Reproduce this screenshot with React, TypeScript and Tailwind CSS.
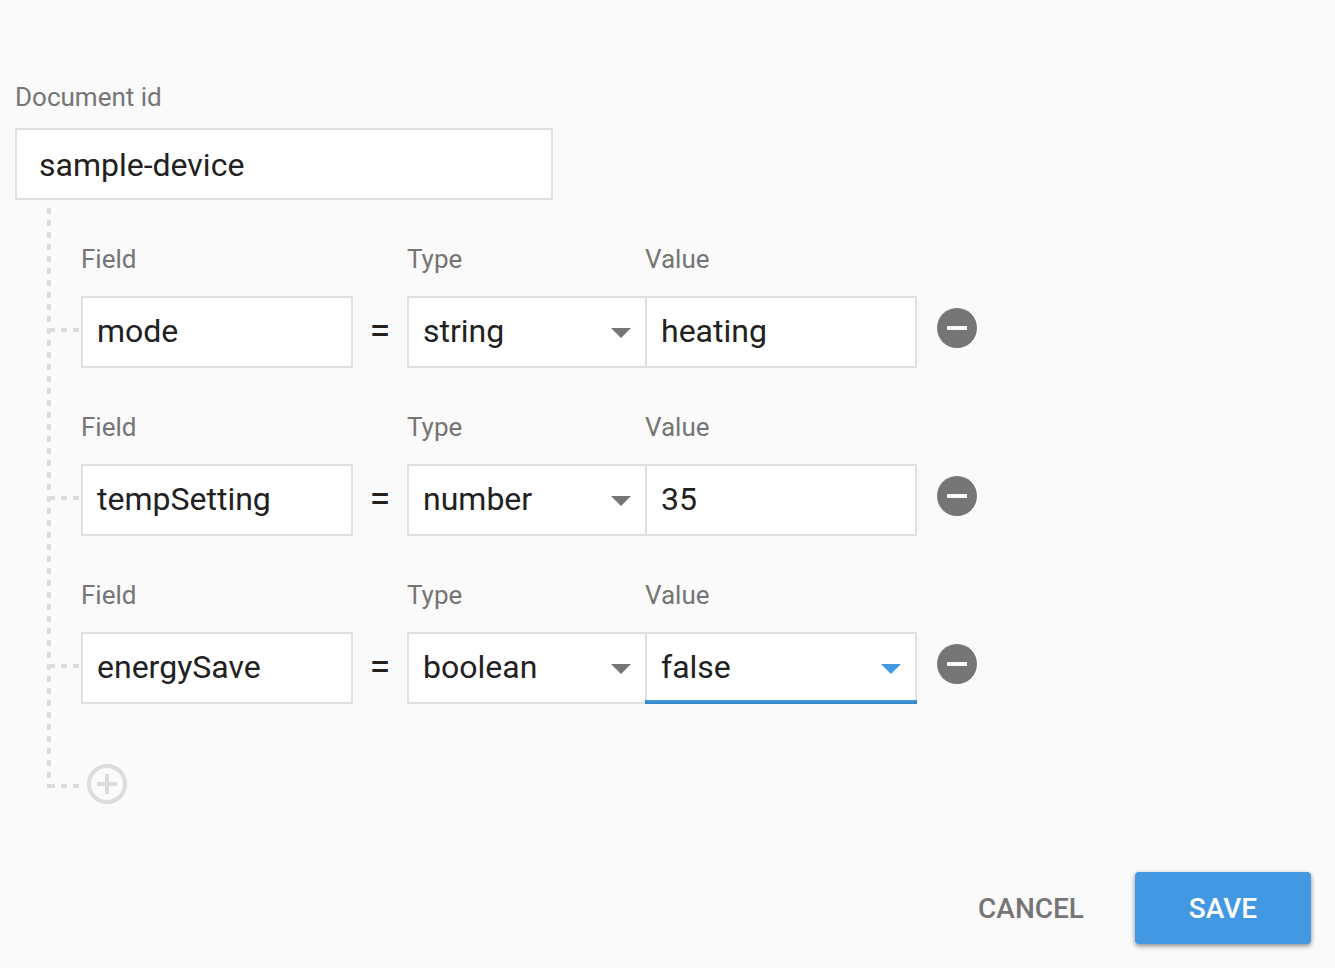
import type { ReactNode } from "react";

type Row = { field: string; type: string; value: string; active?: boolean };

const rows: Row[] = [
  { field: "mode", type: "string", value: "heating" },
  { field: "tempSetting", type: "number", value: "35" },
  { field: "energySave", type: "boolean", value: "false", active: true },
];

function Label({ children }: { children: ReactNode }) {
  return (
    <div className="h-8 whitespace-nowrap text-[26px] leading-8 text-[#757575]">
      {children}
    </div>
  );
}

function Caret({ className }: { className: string }) {
  return (
    <svg viewBox="0 0 20 10" className={`h-[10px] w-5 ${className}`}>
      <path d="M0 0h20L10 10z" fill="currentColor" />
    </svg>
  );
}

function Branch() {
  return (
    <div className="h-1 w-7 shrink-0 bg-[repeating-linear-gradient(90deg,#dcdcdc_0_4px,transparent_4px_10px,#dcdcdc_10px_12px)]" />
  );
}

const box =
  "mt-[21px] flex h-[72px] items-center justify-between border-2 border-[#e0e0e0] bg-white pl-[14px] pr-[14px] pb-[2px] text-[32px] leading-10 text-[#212121]";

function FieldRow({ row }: { row: Row }) {
  return (
    <div className="flex h-[168px]">
      <div className="pt-[120px]">
        <Branch />
      </div>
      <div className="ml-[2px] w-[272px] pt-[35px]">
        <Label>Field</Label>
        <div className={box}>{row.field}</div>
      </div>
      <div className="w-[54px] pt-[103px] text-center text-[38px] leading-10 text-[#212121]">=</div>
      <div className="w-[240px] pt-[35px]">
        <Label>Type</Label>
        <div className={box}>
          <span>{row.type}</span>
          <Caret className="mt-[4px] text-[#757575]" />
        </div>
      </div>
      <div className="-ml-[2px] w-[272px] pt-[35px]">
        <Label>Value</Label>
        {row.active ? (
          <div className="mt-[21px]">
            <div className="flex h-[68px] items-center justify-between border-2 border-b-0 border-[#e0e0e0] bg-white px-[14px] text-[32px] leading-10 text-[#212121]">
              <span>{row.value}</span>
              <Caret className="mt-[4px] text-[#4299e1]" />
            </div>
            <div className="h-1 border-x-2 border-b-2 border-[#3a87c8] bg-[#4299e1]" />
          </div>
        ) : (
          <div className={box}>{row.value}</div>
        )}
      </div>
      <button className="ml-5 mt-[100px] h-10 w-10">
        <svg viewBox="0 0 40 40" className="block h-10 w-10">
          <circle cx="20" cy="20" r="20" fill="#757575" />
          <path d="M10 18h20v4H10z" fill="#fafafa" />
        </svg>
      </button>
    </div>
  );
}

export default function App() {
  return (
    <div className="flex h-[968px] w-[1335px] flex-col overflow-hidden bg-[#fafafa] pt-[81px] font-['Roboto',sans-serif]">
      <div className="pl-[15px]">
        <Label>Document id</Label>
        <div className="mt-[15px] flex h-[72px] w-[538px] items-center border-2 border-[#e0e0e0] bg-white pl-[22px] pt-[2px] text-[32px] leading-10 text-[#212121]">
          sample-device
        </div>
      </div>
      <div className="ml-[47px] mt-2 flex h-[596px]">
        <div className="h-[580px] w-1 bg-[repeating-linear-gradient(180deg,#dcdcdc_0_6px,transparent_6px_12px)]" />
        <div>
          {rows.map((row) => (
            <FieldRow key={row.field} row={row} />
          ))}
          <div className="flex h-[92px] pt-[52px]">
            <div className="pt-5">
              <Branch />
            </div>
            <button className="ml-2 h-10 w-10">
              <svg viewBox="0 0 40 40" className="block h-10 w-10">
                <circle cx="20" cy="20" r="18" fill="none" stroke="#dcdcdc" strokeWidth="4" />
                <path d="M18 10h4v8h8v4h-8v8h-4v-8h-8v-4h8z" fill="#dcdcdc" />
              </svg>
            </button>
          </div>
        </div>
      </div>
      <div className="mt-[68px] flex justify-end pr-6 text-[28px] font-medium leading-8">
        <button className="mr-[51px] h-[72px] pt-[2px] text-[#757575]">CANCEL</button>
        <button className="h-[72px] w-[176px] rounded-[4px] bg-[#4299e1] pt-[2px] text-white shadow-[0_2px_5px_rgba(0,0,0,0.45)]">
          SAVE
        </button>
      </div>
    </div>
  );
}
